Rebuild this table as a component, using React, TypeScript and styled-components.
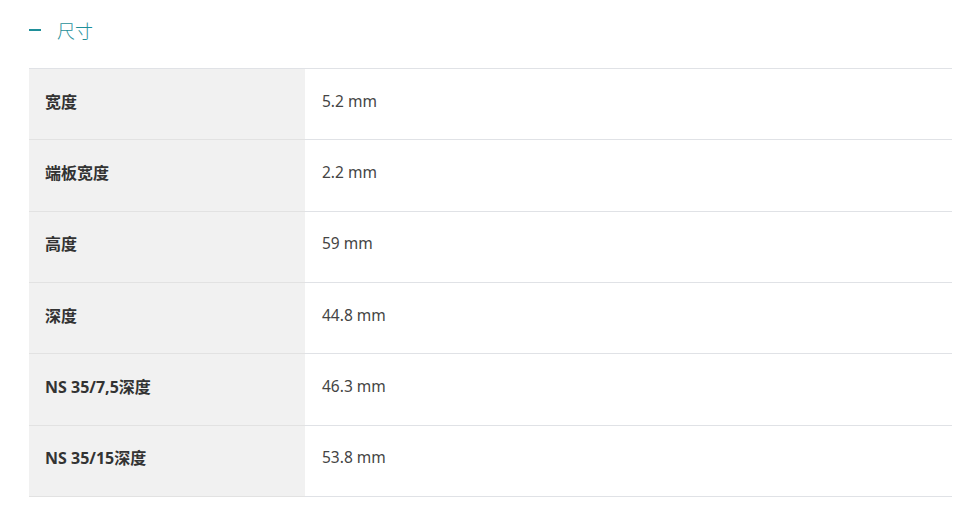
import React from "react";
import styled, { createGlobalStyle } from "styled-components";

const Global = createGlobalStyle`
  html, body { margin: 0; padding: 0; background: #fff; }
  body { font-family: "Noto Sans", "Noto Sans CJK SC", sans-serif; }
`;

const Page = styled.div`
  padding: 15px 11px 0 29px;
`;

const Header = styled.div`
  display: flex;
  align-items: center;
  gap: 16px;
  height: 30px;
  color: #1f8f99;
  font-size: 18px;
  font-weight: 300;
  margin-bottom: 23px;
`;

const Dash = styled.span`
  display: inline-block;
  width: 12px;
  height: 2px;
  background: #1f8f99;
`;

const Title = styled.span`
  font-family: "Noto Sans CJK SC", sans-serif;
  font-weight: 300;
`;

const Table = styled.div`
  display: grid;
  grid-template-columns: 276px 1fr;
  border-top: 1px solid #e0e2e6;
`;

const Row = styled.div`
  display: contents;
`;

const Label = styled.div`
  background: #f1f1f1;
  height: 71.33px;
  box-sizing: border-box;
  display: flex;
  align-items: center;
  padding: 0 0 7px 16px;
  font-size: 16px;
  font-weight: 700;
  color: #333;
  border-bottom: 1px solid #e2e2e2;
`;

const Value = styled.div`
  height: 71.33px;
  box-sizing: border-box;
  display: flex;
  align-items: center;
  padding: 0 0 7px 17px;
  font-size: 15.5px;
  color: #444;
  border-bottom: 1px solid #e0e2e6;
`;

const rows: [string, string][] = [
  ["宽度", "5.2 mm"],
  ["端板宽度", "2.2 mm"],
  ["高度", "59 mm"],
  ["深度", "44.8 mm"],
  ["NS 35/7,5深度", "46.3 mm"],
  ["NS 35/15深度", "53.8 mm"],
];

export default function App() {
  return (
    <>
      <Global />
      <Page>
        <Header>
          <Dash />
          <Title>尺寸</Title>
        </Header>
        <Table>
          {rows.map(([k, v]) => (
            <Row key={k}>
              <Label>{k}</Label>
              <Value>{v}</Value>
            </Row>
          ))}
        </Table>
      </Page>
    </>
  );
}
